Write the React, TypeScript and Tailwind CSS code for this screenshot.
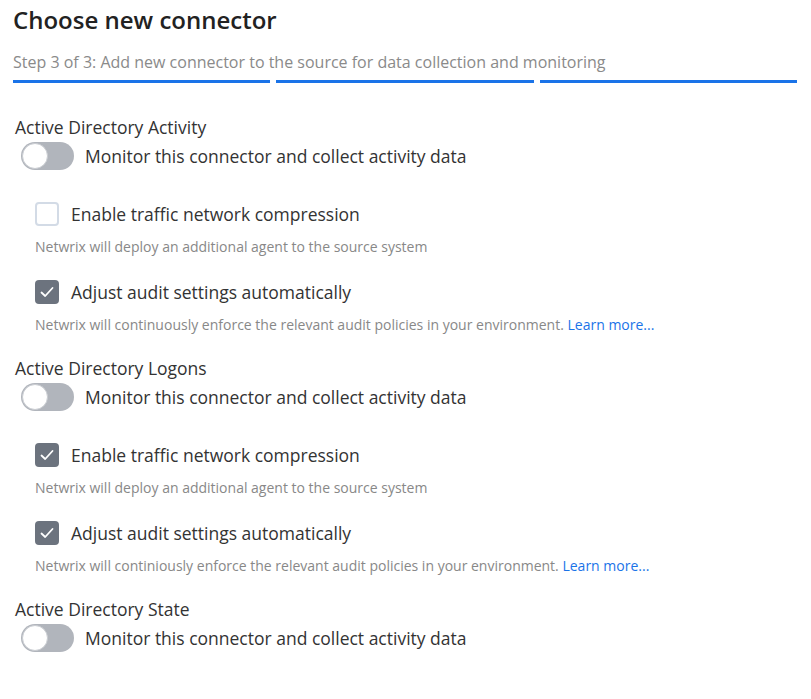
import React from 'react';

type Option = { label: string; hint: string; checked: boolean; link?: boolean };
type Section = { title: string; options: Option[] };

const sections: Section[] = [
  {
    title: 'Active Directory Activity',
    options: [
      { label: 'Enable traffic network compression', hint: 'Netwrix will deploy an additional agent to the source system', checked: false },
      { label: 'Adjust audit settings automatically', hint: 'Netwrix will continuously enforce the relevant audit policies in your environment.', checked: true, link: true },
    ],
  },
  {
    title: 'Active Directory Logons',
    options: [
      { label: 'Enable traffic network compression', hint: 'Netwrix will deploy an additional agent to the source system', checked: true },
      { label: 'Adjust audit settings automatically', hint: 'Netwrix will continiously enforce the relevant audit policies in your environment.', checked: true, link: true },
    ],
  },
  { title: 'Active Directory State', options: [] },
];

function Toggle() {
  return (
    <div className="relative w-[53px] h-[28px] rounded-full bg-[#b1b5bc] shrink-0">
      <div className="absolute left-[1px] top-[1px] w-[26px] h-[26px] rounded-full bg-white border border-[#c9ccd1]" />
    </div>
  );
}

function Checkbox({ checked }: { checked: boolean }) {
  if (!checked) return <div className="w-[24px] h-[24px] rounded-[4px] border-2 border-[#d3dbe6] bg-white shrink-0" />;
  return (
    <div className="w-[24px] h-[24px] rounded-[4px] bg-[#6c737e] flex items-center justify-center shrink-0">
      <svg width="16" height="16" viewBox="0 0 16 16" fill="none"><path d="M2.5 8.5 L6.2 12 L13.5 4" stroke="white" strokeWidth="1.8" strokeLinecap="round" strokeLinejoin="round" /></svg>
    </div>
  );
}

export default function App() {
  return (
    <div className="w-[811px] h-[699px] bg-white px-[13px] overflow-hidden text-[#333] [font-family:'Open_Sans',sans-serif]">
      <h1 className="pt-[4px] text-[24px] leading-[32px] font-semibold text-[#222]">Choose new connector</h1>
      <p className="mt-[14px] text-[16px] leading-[24px] text-[#8a8a8a]">Step 3 of 3: Add new connector to the source for data collection and monitoring</p>
      <div className="mt-[6px] flex gap-[6px] w-[784px]">
        <div className="flex-1 h-[3px] bg-[#1a73e8]" />
        <div className="flex-1 h-[3px] bg-[#1a73e8]" />
        <div className="flex-1 h-[3px] bg-[#1a73e8]" />
      </div>
      <div className="mt-[32px]">
        {sections.map((s, i) => (
          <div key={s.title} className={i > 0 ? 'mt-[21px]' : ''}>
            <div className="pl-[2px] text-[17.5px] leading-[24px] text-[#333]">{s.title}</div>
            <div className="mt-[3px] pl-[8px] flex items-center gap-[11px] h-[28px]">
              <Toggle />
              <span className="text-[17.5px] text-[#333]">Monitor this connector and collect activity data</span>
            </div>
            {s.options.map((o, j) => (
              <div key={o.label} className={`pl-[22px] ${j === 0 ? 'mt-[32px]' : 'mt-[23px]'}`}>
                <div className="flex items-center gap-[12px] h-[24px]">
                  <Checkbox checked={o.checked} />
                  <span className="text-[17.5px] text-[#333]">{o.label}</span>
                </div>
                <div className="mt-[11px] text-[14px] leading-[20px] text-[#888]">
                  {o.hint}{o.link && <> <span className="text-[#1a73e8]">Learn more...</span></>}
                </div>
              </div>
            ))}
          </div>
        ))}
      </div>
    </div>
  );
}
